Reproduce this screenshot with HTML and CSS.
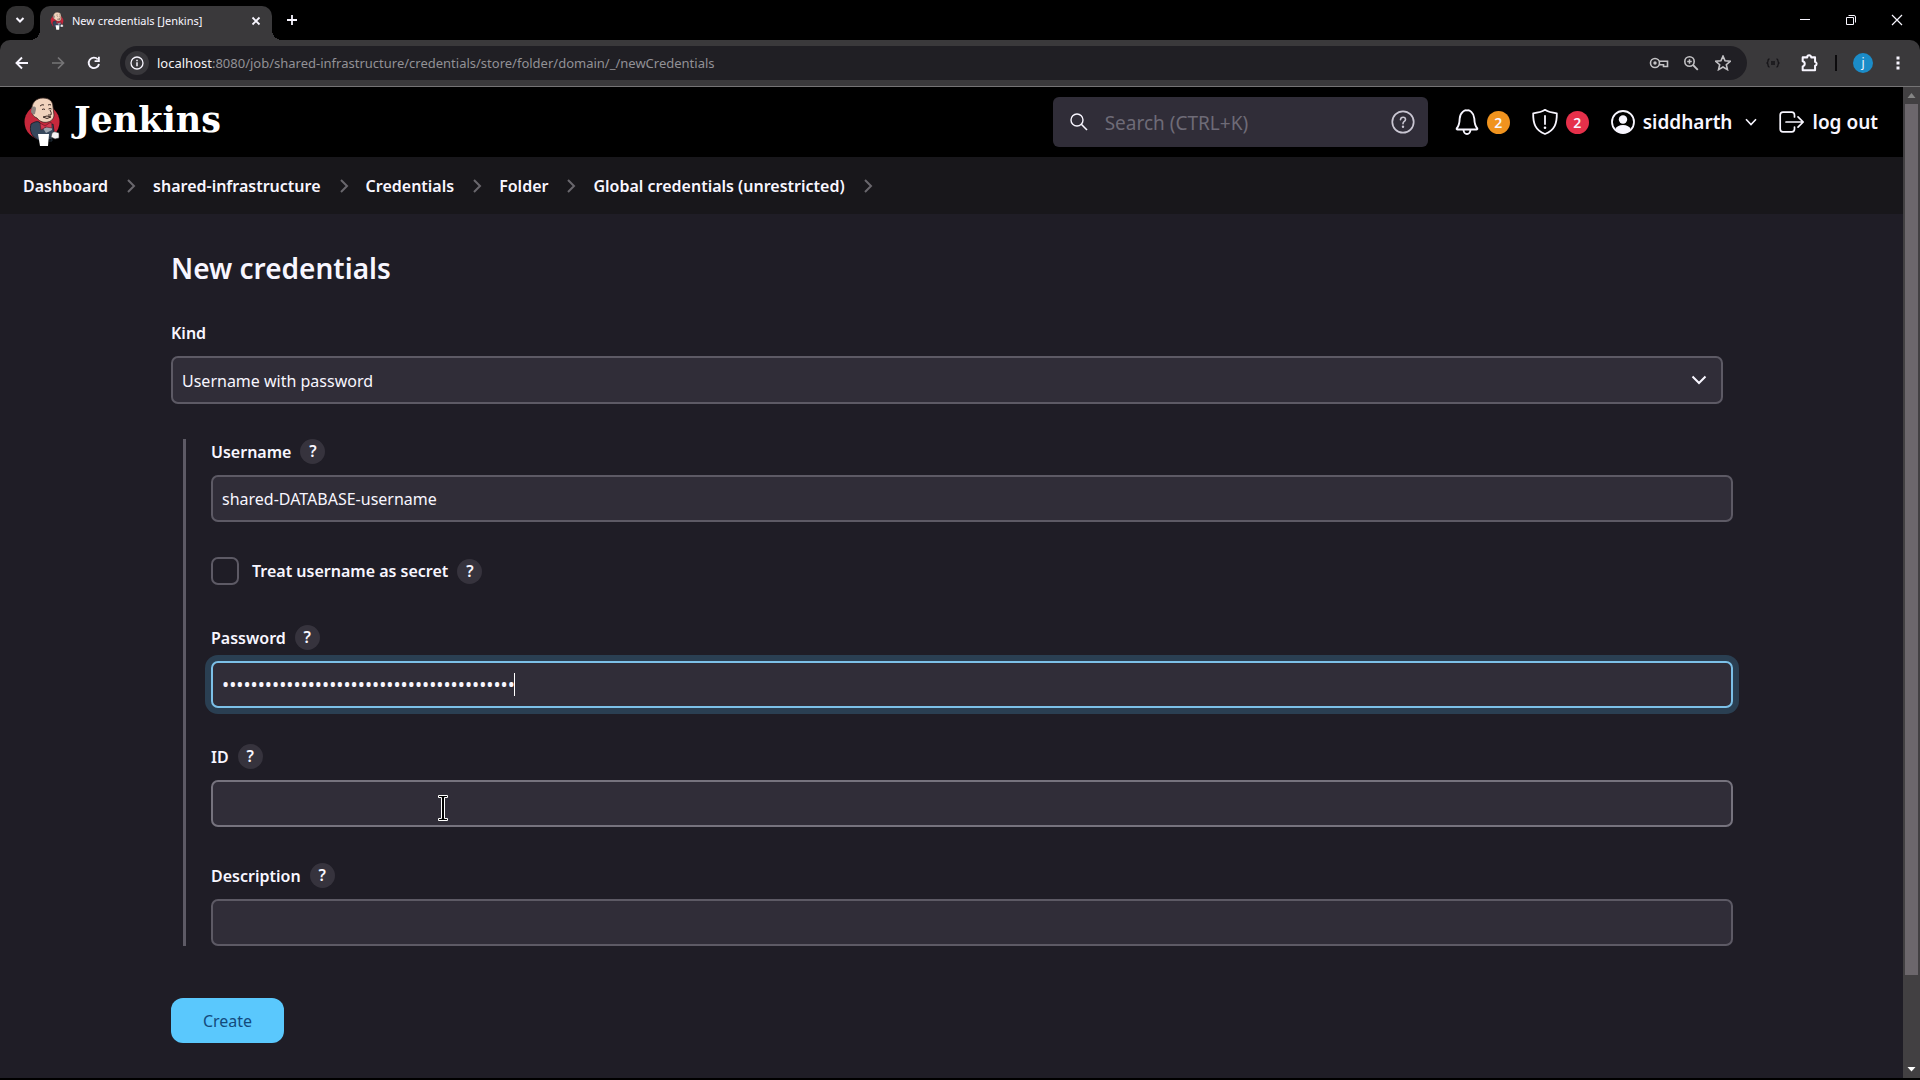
FILE: index.html
```html
<!DOCTYPE html>
<html lang="en">
<head>
<meta charset="utf-8">
<meta name="viewport" content="width=device-width, initial-scale=1">
<title>New credentials [Jenkins]</title>
<link rel="stylesheet" href="styles.css">
</head>
<body>
<svg class="defs" aria-hidden="true">
  <symbol id="butler" viewBox="0 0 36 50">
    <circle cx="18" cy="25" r="17.500" fill="#c6283c"/>
    <path d="M7 27 C10 25 13 24 15 25 L20 30 L29 27 L30 34 L28 42 L14 43 L9 39 C6 35 6 31 7 27Z" fill="#36475c" stroke="#141a22" stroke-width=".8"/>
    <path d="M17 28 L21 31 L28 27 L28 33 L22 36 Z" fill="#9aa3ad"/>
    <path d="M8 14 C7 6 12 1 19 1 C25 1 29 4 29 10 L30 18 C30 21 28 24 24 25 C20 26 16 25 13 21 C10 20 8 18 8 14Z" fill="#f1d3bd" stroke="#3b2a25" stroke-width=".8"/>
    <path d="M8 10 C10 9 12 9 12 12 L11 17 C9 18 7 16 7 14Z" fill="#8d8480"/>
    <path d="M16 9 q2 -2 4 -1 M24 8 q2 -1 3 0 M18 12.500 q2 -1 3 0 M24.500 12 q1.500 -1 3 0 M26 13 q2 3 1 5 h-3 M19 20 q4 -2 8 0 q-4 3 -8 0" fill="none" stroke="#3b2a25" stroke-width="1"/>
    <path d="M16 26 l5 3 l6 -4 l1 6 l-6 -1 l-5 3 z" fill="#d33850" stroke="#5e1420" stroke-width=".6"/>
    <path d="M14 37 h11 l-1 12 h-8 z" fill="#fff"/>
    <path d="M25 40 q4 1 3 4 h-3" fill="none" stroke="#22303c" stroke-width="1"/>
    <path d="M28 36 q2 -2 4 -1 l3 1 v5 l-4 1 l-4 -2z" fill="#f5f5f5" stroke="#333" stroke-width=".6"/>
  </symbol>
  <symbol id="chevron-right" viewBox="0 0 10 16"><path d="M2 2 L8 8 L2 14" fill="none" stroke="currentColor" stroke-width="2"/></symbol>
</svg>

<header class="browser">
  <div class="tabstrip">
    <button class="tab-search" type="button" aria-label="Search tabs"><svg width="12" height="12" viewBox="0 0 12 12"><path d="M2.500 4 L6 7.500 L9.500 4" fill="none" stroke="currentColor" stroke-width="2"/></svg></button>
    <div class="tab">
      <svg class="tab-icon" width="14" height="18"><use href="#butler"/></svg>
      <span class="tab-title">New credentials [Jenkins]</span>
      <button class="plain tab-close" type="button" aria-label="Close tab"><svg width="10" height="10" viewBox="0 0 10 10"><path d="M1.500 1.500 L8.500 8.500 M8.500 1.500 L1.500 8.500" stroke="currentColor" stroke-width="1.800"/></svg></button>
    </div>
    <button class="plain new-tab" type="button" aria-label="New tab"><svg width="12" height="12" viewBox="0 0 12 12"><path d="M6 1 V11 M1 6 H11" stroke="currentColor" stroke-width="1.800"/></svg></button>
    <div class="window-controls">
      <button class="plain" type="button" aria-label="Minimize"><svg width="12" height="12" viewBox="0 0 12 12"><path d="M1 5.500 H11" stroke="currentColor"/></svg></button>
      <button class="plain" type="button" aria-label="Restore"><svg width="12" height="12" viewBox="0 0 12 12"><path d="M1.500 3.500 H8.500 V10.500 H1.500 Z M3.500 1.500 H9 Q10.500 1.500 10.500 3 V8.500" fill="none" stroke="currentColor"/></svg></button>
      <button class="plain" type="button" aria-label="Close"><svg width="12" height="12" viewBox="0 0 12 12"><path d="M1 1 L11 11 M11 1 L1 11" stroke="currentColor" stroke-width="1.200"/></svg></button>
    </div>
  </div>
  <div class="toolbar">
    <button class="plain nav" type="button" aria-label="Back"><svg width="16" height="16" viewBox="0 0 16 16"><path d="M14 8 H3 M8 2.500 L2.500 8 L8 13.500" fill="none" stroke="currentColor" stroke-width="1.900"/></svg></button>
    <button class="plain nav nav-off" type="button" aria-label="Forward"><svg width="16" height="16" viewBox="0 0 16 16"><path d="M2 8 H13 M8 2.500 L13.500 8 L8 13.500" fill="none" stroke="currentColor" stroke-width="1.700"/></svg></button>
    <button class="plain nav" type="button" aria-label="Reload"><svg width="16" height="16" viewBox="0 0 16 16"><path d="M13 9 A5.200 5.200 0 1 1 11.800 4.400" fill="none" stroke="currentColor" stroke-width="1.900"/><path d="M13.800 1.800 V7 H8.600 V5.300 H12 V1.800Z" fill="currentColor"/></svg></button>
    <div class="address">
      <button class="plain site-info" type="button" aria-label="Site information"><svg width="14" height="14" viewBox="0 0 14 14"><circle cx="7" cy="7" r="6" fill="none" stroke="currentColor" stroke-width="1.300"/><path d="M7 6.200 V10.200 M7 3.800 V5.200" stroke="currentColor" stroke-width="1.500"/></svg></button>
      <div class="url" role="textbox" aria-label="Address"><span class="host">localhost</span>:8080/job/shared-infrastructure/credentials/store/folder/domain/_/newCredentials</div>
      <button class="plain action" type="button" aria-label="Passwords"><svg width="20" height="14" viewBox="0 0 20 14"><circle cx="6" cy="7" r="4.500" fill="none" stroke="currentColor" stroke-width="1.600"/><circle cx="6" cy="7" r="1.700" fill="currentColor"/><path d="M10 5.300 H18.500 V10.500 H14.500 V8.700 H10.200" fill="none" stroke="currentColor" stroke-width="1.600"/></svg></button>
      <button class="plain action" type="button" aria-label="Zoom"><svg width="16" height="16" viewBox="0 0 16 16"><circle cx="6.500" cy="6.500" r="4.700" fill="none" stroke="currentColor" stroke-width="1.600"/><path d="M10 10 L14.800 14.800" stroke="currentColor" stroke-width="1.800"/><path d="M6.500 4.200 V8.800 M4.200 6.500 H8.800" stroke="currentColor" stroke-width="1.500"/></svg></button>
      <button class="plain action" type="button" aria-label="Bookmark"><svg width="16" height="16" viewBox="1 1 14 14"><path d="M8 2 L9.800 6.100 L14.300 6.500 L10.900 9.500 L11.900 13.800 L8 11.500 L4.100 13.800 L5.100 9.500 L1.700 6.500 L6.200 6.100Z" fill="none" stroke="currentColor" stroke-width="1.400"/></svg></button>
    </div>
    <div class="extensions">
      <button class="plain action ext-off" type="button" aria-label="Extension"><svg width="14" height="10" viewBox="0 0 14 10"><path d="M3.500 1 Q2 1 2 3 Q2 5 .5 5 Q2 5 2 7 Q2 9 3.500 9 M10.500 1 Q12 1 12 3 Q12 5 13.500 5 Q12 5 12 7 Q12 9 10.500 9 M5 4 H9 M5 6 H9" fill="none" stroke="currentColor" stroke-width="1.300"/></svg></button>
      <button class="plain action" type="button" aria-label="Extensions"><svg width="18" height="18" viewBox="1 1 16 16"><path d="M2.500 4 H6.500 A1.800 1.800 0 0 1 10.100 4 H13.500 V8 A1.800 1.800 0 0 1 13.500 11.500 V15.500 H2.500 V12 A2.300 2.300 0 0 0 2.500 7.500Z" fill="none" stroke="currentColor" stroke-width="1.800" stroke-linejoin="round"/></svg></button>
      <span class="divider"></span>
      <button class="plain avatar" type="button" aria-label="Profile">j</button>
      <button class="plain action" type="button" aria-label="Menu"><svg width="4" height="16" viewBox="0 0 4 16"><path d="M.500 1.500h3v3h-3z M.500 6.500h3v3h-3z M.500 11.500h3v3h-3z" fill="currentColor"/></svg></button>
    </div>
  </div>
</header>

<div class="viewport">
  <div class="page">
    <header class="page-header">
      <a class="brand" href="#">
        <svg width="36" height="50"><use href="#butler"/></svg>
        <span>Jenkins</span>
      </a>
      <div class="header-tools">
        <div class="search">
          <svg width="20" height="20" viewBox="0 0 20 20"><circle cx="8" cy="8" r="6" fill="none" stroke="currentColor" stroke-width="1.400"/><path d="M12.300 12.300 L18 18" stroke="currentColor" stroke-width="1.600"/></svg>
          <input type="search" placeholder="Search (CTRL+K)" aria-label="Search">
          <a class="search-help" href="#" aria-label="Search help"><svg width="24" height="24" viewBox="0 0 24 24"><circle cx="12" cy="12" r="10.700" fill="none" stroke="currentColor" stroke-width="1.700"/><path d="M9.500 9.800 Q9.600 7.200 12.100 7.200 Q14.500 7.200 14.500 9.400 Q14.500 10.700 13 11.700 Q12 12.400 12 13.700" fill="none" stroke="currentColor" stroke-width="1.600" stroke-linecap="round"/><circle cx="12" cy="16.700" r="1.200" fill="currentColor"/></svg></a>
        </div>
        <a class="tool" href="#" aria-label="Notifications">
          <svg width="24" height="28" viewBox="0 0 24 28"><path d="M12 2.500 C14 1.500 19 4.500 19.300 10.500 C19.500 16 20.500 18.500 22.300 20.500 Q22.600 21.500 21.500 21.500 H2.500 Q1.400 21.500 1.700 20.500 C3.500 18.500 4.500 16 4.700 10.500 C5 4.500 10 1.500 12 2.500Z M8.500 22 Q9 26 12 26 Q15 26 15.500 22" fill="none" stroke="currentColor" stroke-width="1.900" stroke-linejoin="round"/></svg>
          <span class="badge badge-warning">2</span>
        </a>
        <a class="tool" href="#" aria-label="Security warnings">
          <svg width="26" height="28" viewBox="0 0 26 28"><path d="M13 1.800 Q17 4.500 24.800 5.300 C25 15 23 22 13 26 C3 22 1 15 1.200 5.300 Q9 4.500 13 1.800Z" fill="none" stroke="currentColor" stroke-width="1.800" stroke-linejoin="round"/><path d="M13 8 V16" stroke="currentColor" stroke-width="1.800" stroke-linecap="round"/><circle cx="13" cy="19.800" r="1.300" fill="currentColor"/></svg>
          <span class="badge badge-danger">2</span>
        </a>
        <a class="tool" href="#">
          <svg width="24" height="24" viewBox="0 0 24 24"><circle cx="12" cy="12" r="11" fill="none" stroke="currentColor" stroke-width="1.800"/><circle cx="12" cy="9.500" r="4.200" fill="currentColor"/><path d="M4 19.500 Q6 15 12 15 Q18 15 20 19.500 Q16 23 12 23 Q8 23 4 19.500Z" fill="currentColor"/></svg>
          <span>siddharth</span>
          <svg class="tool-caret" width="12" height="8" viewBox="0 0 12 8"><path d="M1 1.200 L6 6.500 L11 1.200" fill="none" stroke="currentColor" stroke-width="1.600"/></svg>
        </a>
        <a class="tool" href="#">
          <svg width="26" height="22" viewBox="0 0 26 22"><path d="M15.500 6 V4 Q15.500 1.200 12.700 1.200 H4 Q1.200 1.200 1.200 4 V18 Q1.200 20.800 4 20.800 H12.700 Q15.500 20.800 15.500 18 V16 M7 11 H24 M19 5.800 L24.200 11 L19 16.200" fill="none" stroke="currentColor" stroke-width="1.700" stroke-linejoin="round" stroke-linecap="round"/></svg>
          <span>log out</span>
        </a>
      </div>
    </header>

    <nav class="breadcrumbs" aria-label="Breadcrumbs">
      <ol>
        <li><a href="#">Dashboard</a><svg width="10" height="16"><use href="#chevron-right"/></svg></li>
        <li><a href="#">shared-infrastructure</a><svg width="10" height="16"><use href="#chevron-right"/></svg></li>
        <li><a href="#">Credentials</a><svg width="10" height="16"><use href="#chevron-right"/></svg></li>
        <li><a href="#">Folder</a><svg width="10" height="16"><use href="#chevron-right"/></svg></li>
        <li><a href="#">Global credentials (unrestricted)</a><svg width="10" height="16"><use href="#chevron-right"/></svg></li>
      </ol>
    </nav>

    <main class="content">
      <h1>New credentials</h1>
      <form>
        <label class="label kind-label" for="kind">Kind</label>
        <div class="select">
          <select id="kind"><option>Username with password</option></select>
          <svg width="16" height="10" viewBox="0 0 16 10"><path d="M1.500 1.500 L8 8 L14.500 1.500" fill="none" stroke="currentColor" stroke-width="2"/></svg>
        </div>
        <div class="nested">
          <div class="field">
            <div class="label-row"><label class="label" for="username">Username</label><button class="help" type="button" aria-label="Help for Username">?</button></div>
            <input class="input" id="username" type="text" value="shared-DATABASE-username">
          </div>
          <div class="check-row"><input id="secret" type="checkbox"><label class="label" for="secret">Treat username as secret</label><button class="help" type="button" aria-label="Help for Treat username as secret">?</button></div>
          <div class="field">
            <div class="label-row"><label class="label" for="password">Password</label><button class="help" type="button" aria-label="Help for Password">?</button></div>
            <div class="overlay-host">
              <input class="input input-active" id="password" type="password" value="shared-database-password-0123456789-abcde">
              <span class="text-caret"></span>
            </div>
          </div>
          <div class="field">
            <div class="label-row"><label class="label" for="cred-id">ID</label><button class="help" type="button" aria-label="Help for ID">?</button></div>
            <div class="overlay-host">
              <input class="input input-hover" id="cred-id" type="text">
              <svg class="pointer" width="12" height="28" viewBox="0 0 12 28" aria-hidden="true"><path d="M1.500 1.500 H10.500 V3.500 H7.500 V24.500 H10.500 V26.500 H1.500 V24.500 H4.500 V3.500 H1.500Z" fill="#000" stroke="#fff"/></svg>
            </div>
          </div>
          <div class="field">
            <div class="label-row"><label class="label" for="description">Description</label><button class="help" type="button" aria-label="Help for Description">?</button></div>
            <input class="input" id="description" type="text">
          </div>
        </div>
        <button class="create" type="submit">Create</button>
      </form>
    </main>
  </div>

  <div class="scrollbar" aria-hidden="true">
    <svg width="17" height="17" viewBox="0 0 17 17"><path d="M8.500 6 L12.500 11 H4.500Z" fill="#858585"/></svg>
    <div class="scroll-track"><div class="scroll-thumb"></div></div>
    <svg width="17" height="17" viewBox="0 0 17 17"><path d="M4.500 6 H12.500 L8.500 10.500Z" fill="#fff"/></svg>
  </div>
</div>
</body>
</html>
```
FILE: styles.css
```css
* {
  box-sizing: border-box;
}

body {
  display: flex;
  flex-direction: column;
  min-height: 100vh;
  margin: 0;
  border-bottom: 2px solid #000;
  background: #000;
  color: #f8f6ff;
  font: 16px/24px "Noto Sans", "Open Sans", sans-serif;
}

a {
  color: inherit;
  text-decoration: none;
}

svg {
  display: block;
  flex: none;
}

button,
input,
select {
  color: inherit;
  font: inherit;
}

.defs {
  position: absolute;
  width: 0;
  height: 0;
}

.plain {
  display: flex;
  align-items: center;
  justify-content: center;
  padding: 0;
  border: 0;
  background: none;
}

/* Browser frame */

.tabstrip {
  display: flex;
  align-items: flex-end;
  height: 40px;
  padding-left: 6px;
}

.tab-search {
  display: flex;
  align-items: center;
  justify-content: center;
  width: 28px;
  height: 28px;
  margin: 0 6px 6px 0;
  padding: 0;
  border: 0;
  border-radius: 10px;
  background: #323132;
}

.tab {
  position: relative;
  display: flex;
  align-items: center;
  gap: 8px;
  width: 232px;
  height: 34px;
  padding: 0 11px 5px 10px;
  border-radius: 10px 10px 0 0;
  background: #3a393b;
  font-size: 11px;
}

.tab::before,
.tab::after {
  position: absolute;
  bottom: 0;
  width: 10px;
  height: 10px;
  content: "";
}

.tab::before {
  right: 100%;
  background: radial-gradient(circle at 0 0, transparent 10px, #3a393b 10px);
}

.tab::after {
  left: 100%;
  background: radial-gradient(circle at 100% 0, transparent 10px, #3a393b 10px);
}

.tab-title {
  flex: 1;
  white-space: nowrap;
}

.new-tab {
  width: 40px;
  height: 40px;
}

.window-controls {
  display: flex;
  margin-left: auto;
}

.window-controls button {
  width: 46px;
  height: 40px;
}

.toolbar {
  display: flex;
  align-items: center;
  height: 47px;
  padding: 0 13px 0 4px;
  border-bottom: 1px solid #757475;
  border-radius: 10px 10px 0 0;
  background: #3a393b;
}

.nav {
  width: 36px;
  height: 36px;
}

.nav-off {
  color: #767577;
}

.address {
  display: flex;
  flex: 1;
  align-items: center;
  gap: 14px;
  height: 34px;
  margin-left: 8px;
  padding: 0 15px 0 5px;
  border-radius: 17px;
  background: #201f24;
}

.site-info {
  width: 24px;
  height: 24px;
  border-radius: 50%;
  background: #38373b;
}

.url {
  flex: 1;
  margin-left: -6px;
  overflow: hidden;
  color: #929196;
  font-size: 13px;
  white-space: nowrap;
}

.host {
  color: #f4f3f6;
}

.action {
  width: 18px;
  height: 20px;
}

.address .action {
  color: #c3c2c5;
}

.extensions {
  display: flex;
  align-items: center;
  gap: 16px;
  padding-left: 17px;
}

.ext-off {
  color: #161518;
}

.extensions .ext-off {
  margin-right: 3px;
}

.divider {
  width: 2px;
  height: 16px;
  background: #0c0b0d;
}

.avatar {
  width: 20px;
  height: 20px;
  border-radius: 50%;
  background: #1b8cc8;
  font-size: 12px;
  line-height: 20px;
}

/* Page frame */

.viewport {
  display: flex;
  flex: 1;
}

.page {
  display: flex;
  flex: 1;
  flex-direction: column;
  min-width: 0;
  background: #1f1d26;
}

.page-header {
  display: flex;
  align-items: center;
  justify-content: space-between;
  height: 70px;
  padding: 0 25px 0 24px;
  background: #000;
}

.brand {
  display: flex;
  align-items: center;
  gap: 14px;
  color: #fff;
  font: bold 35px/44px "DejaVu Serif", serif;
}

.brand span {
  padding-bottom: 4px;
}

.header-tools {
  display: flex;
  align-items: center;
  gap: 22px;
}

.search {
  display: flex;
  align-items: center;
  gap: 16px;
  width: 375px;
  height: 50px;
  padding: 0 13px 0 16px;
  border-radius: 6px;
  background: #302d38;
}

.search input {
  flex: 1;
  min-width: 0;
  padding: 2px 0 0;
  border: 0;
  outline: 0;
  background: none;
  font-size: 19px;
}

.search input::placeholder {
  color: #6e6b77;
  opacity: 1;
}

.search-help {
  color: #c9c6d2;
}

.tool {
  display: flex;
  align-items: center;
  gap: 8px;
  font-size: 19px;
  font-weight: 600;
}

.search + .tool {
  margin-left: 5px;
}

.tool-caret {
  margin-left: 4px;
}

.badge {
  width: 23px;
  height: 23px;
  border-radius: 50%;
  font-size: 14px;
  line-height: 23px;
  text-align: center;
}

.badge-warning {
  background: #f0931e;
}

.badge-danger {
  background: #e6304a;
}

.breadcrumbs {
  height: 57px;
  padding: 0 23px;
  background: #18171b;
  font-weight: 600;
}

.breadcrumbs ol {
  display: flex;
  align-items: center;
  height: 100%;
  margin: 0;
  padding: 0;
  gap: 17px;
  list-style: none;
}

.breadcrumbs li {
  display: flex;
  align-items: center;
  gap: 18px;
}

.breadcrumbs svg {
  color: #69676d;
}

/* Form */

.content {
  padding: 36px 180px 35px 171px;
}

h1 {
  margin: 0 0 35px;
  font-size: 28px;
  font-weight: 600;
  line-height: 36px;
}

.label {
  font-weight: 600;
}

.kind-label {
  display: block;
  margin-bottom: 11px;
}

.select {
  display: grid;
  align-items: center;
}

.select select,
.select svg {
  grid-area: 1 / 1;
}

.select svg {
  justify-self: end;
  margin-right: 16px;
  pointer-events: none;
}

.select select,
.input {
  display: block;
  width: 100%;
  height: 47px;
  padding: 1px 9px 0;
  border: 2px solid #5d5a65;
  border-radius: 7px;
  outline: 0;
  background: #302d38;
}

.select select {
  height: 48px;
  appearance: none;
}

.nested {
  margin: 35px -10px 52px 12px;
  padding-left: 25px;
  border-left: 3px solid #5d5a65;
}

.field + .field {
  margin-top: 36px;
}

.label-row {
  display: flex;
  align-items: center;
  gap: 9px;
  margin-bottom: 11px;
}

.help {
  width: 25px;
  height: 25px;
  padding: 0;
  border: 0;
  border-radius: 50%;
  background: #36333d;
  font-weight: 600;
  line-height: 25px;
}

.check-row {
  display: flex;
  align-items: center;
  gap: 9px;
  margin: 35px 0 40px;
}

.check-row input {
  width: 28px;
  height: 28px;
  margin: 0 4px 0 0;
  border: 2px solid #5d5a65;
  border-radius: 7px;
  appearance: none;
}

.overlay-host {
  position: relative;
}

.input-active {
  border-color: #7cc0e8;
  box-shadow: 0 0 0 6px #2a3f52;
  font-size: 19px;
}

.input-hover {
  border-color: #76737e;
}

.text-caret {
  position: absolute;
  top: 12px;
  left: 303px;
  width: 1px;
  height: 23px;
  background: #fff;
}

.pointer {
  position: absolute;
  top: 14px;
  left: 226px;
}

.create {
  display: block;
  width: 113px;
  height: 45px;
  border: 0;
  border-radius: 12px;
  background: #5ac8fd;
  color: #134a7c;
}

/* Scrollbar */

.scrollbar {
  display: flex;
  flex: none;
  flex-direction: column;
  width: 17px;
  background: #424042;
}

.scroll-track {
  flex: 1;
  padding: 0 2px;
}

.scroll-thumb {
  height: 91%;
  background: #6c676c;
}
```
